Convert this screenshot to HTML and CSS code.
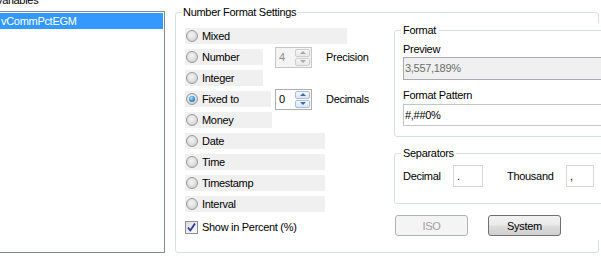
FILE: index.html
```html
<!DOCTYPE html>
<html>
<head>
<meta charset="utf-8">
<link rel="stylesheet" href="styles.css">
</head>
<body>
<div class="root">
  <div class="vars">
    <div class="vars-label">Variables</div>
    <div class="listbox">
      <div class="item selected">vCommPctEGM</div>
    </div>
  </div>

  <fieldset class="group outer">
    <legend>Number Format Settings</legend>
    <div class="cols">
      <div class="options">
        <div class="rows">
          <div class="row"><label class="opt w-mixed"><span class="radio"></span>Mixed</label></div>
          <div class="row">
            <label class="opt w-num"><span class="radio"></span>Number</label>
            <div class="spin disabled gap-num"><span class="val">4</span><span class="btns"><span class="sbtn"><i class="up"></i></span><span class="sbtn"><i class="down"></i></span></span></div>
            <span class="spin-label">Precision</span>
          </div>
          <div class="row"><label class="opt w-num"><span class="radio"></span>Integer</label></div>
          <div class="row">
            <label class="opt w-fixed"><span class="radio on"></span>Fixed to</label>
            <div class="spin gap-fixed"><span class="val">0</span><span class="btns"><span class="sbtn"><i class="up"></i></span><span class="sbtn"><i class="down"></i></span></span></div>
            <span class="spin-label">Decimals</span>
          </div>
          <div class="row"><label class="opt w-money"><span class="radio"></span>Money</label></div>
          <div class="row"><label class="opt w-wide"><span class="radio"></span>Date</label></div>
          <div class="row"><label class="opt w-wide"><span class="radio"></span>Time</label></div>
          <div class="row"><label class="opt w-wide"><span class="radio"></span>Timestamp</label></div>
          <div class="row"><label class="opt w-wide"><span class="radio"></span>Interval</label></div>
        </div>
        <label class="check-row">
          <span class="checkbox"><svg width="11" height="11" viewBox="0 0 11 11"><path d="M2 5.5 L4.3 8.5 L9 1.5" fill="none" stroke="#2a3c9c" stroke-width="1.8" stroke-linejoin="round"/></svg></span>
          Show in Percent (%)
        </label>
      </div>

      <div class="side">
        <fieldset class="group format">
          <legend>Format</legend>
          <div class="field-label first">Preview</div>
          <div class="textbox readonly">3,557,189%</div>
          <div class="field-label second">Format Pattern</div>
          <div class="textbox pattern">#,##0%</div>
        </fieldset>

        <fieldset class="group separators">
          <legend>Separators</legend>
          <div class="sep-row">
            <span class="sep-label dec">Decimal</span>
            <div class="textbox small dec-box">.</div>
            <span class="sep-label th">Thousand</span>
            <div class="textbox small th-box">,</div>
          </div>
        </fieldset>

        <div class="buttons">
          <button class="btn disabled">ISO</button>
          <button class="btn">System</button>
        </div>
      </div>
    </div>
  </fieldset>
</div>
</body>
</html>
```

FILE: styles.css
```css
html, body {
  margin: 0;
  padding: 0;
  background: #fff;
}
body {
  width: 601px;
  height: 270px;
  overflow: hidden;
  font-family: "Liberation Sans", Arial, sans-serif;
  font-size: 11px;
  letter-spacing: -0.3px;
  color: #000;
  line-height: 14px;
}
.root {
  display: flex;
  align-items: flex-start;
}
.vars {
  margin-left: -5px;
  margin-top: -7px;
  width: 170px;
  flex-shrink: 0;
}
.vars-label {
  height: 14px;
  padding-left: 1px;
}
.listbox {
  margin-top: 4px;
  height: 242px;
  box-sizing: border-box;
  border: 1px solid #828790;
  padding: 1px;
}
.item {
  height: 16px;
  line-height: 16px;
  padding-left: 4px;
}
.item.selected {
  background: #3399ff;
  color: #fff;
}

.group {
  margin: 0;
  border: 1px solid #d5dfe5;
  border-radius: 3px;
  min-width: 0;
}
.group legend {
  line-height: 14px;
  height: 14px;
}
.outer {
  margin-left: 10px;
  margin-top: 5px;
  width: 424px;
  box-sizing: border-box;
  padding: 4px 0 12px 9px;
}
.outer > legend {
  margin-left: -3px;
  padding: 0 1px;
}
.cols {
  display: flex;
  align-items: flex-start;
}
.options {
  width: 209px;
  flex-shrink: 0;
  margin-top: 5px;
}
.rows {
  display: flex;
  flex-direction: column;
  gap: 5px;
}
.row {
  display: flex;
  align-items: center;
  height: 16px;
}
.opt {
  display: flex;
  align-items: center;
  height: 16px;
  background: #f0f0f0;
  padding-left: 1px;
  box-sizing: border-box;
  flex-shrink: 0;
}
.w-mixed { width: 162px; }
.w-num { width: 78px; }
.w-fixed { width: 86px; }
.w-money { width: 87px; }
.w-wide { width: 140px; }

.radio {
  width: 12px;
  height: 12px;
  border-radius: 50%;
  box-sizing: border-box;
  border: 1px solid #9a9a9a;
  background: radial-gradient(circle at 45% 40%, #f4f4f4 0%, #e2e2e2 45%, #c4c4c4 100%);
  margin-right: 4px;
  display: flex;
  align-items: center;
  justify-content: center;
  flex-shrink: 0;
}
.radio.on::after {
  content: "";
  width: 6px;
  height: 6px;
  border-radius: 50%;
  background: radial-gradient(circle at 40% 35%, #b8ecff 0%, #3f9be0 45%, #124f94 100%);
}

.spin {
  display: flex;
  width: 37px;
  height: 21px;
  box-sizing: border-box;
  border: 1px solid #abadb3;
  background: #fff;
  padding: 1px;
  flex-shrink: 0;
}
.gap-num { margin-left: 12px; }
.gap-fixed { margin-left: 4px; }
.spin .val {
  flex: 1;
  padding-left: 2px;
  line-height: 17px;
}
.spin .btns {
  width: 15px;
  display: flex;
  flex-direction: column;
  gap: 1px;
}
.sbtn {
  flex: 1;
  box-sizing: border-box;
  border: 1px solid #a9bdd6;
  border-radius: 2px;
  background: linear-gradient(#f6f9fd, #d9e6f5);
  display: flex;
  align-items: center;
  justify-content: center;
}
.sbtn i {
  width: 0;
  height: 0;
  border-left: 3px solid transparent;
  border-right: 3px solid transparent;
}
.sbtn i.up { border-bottom: 3px solid #3d6aa8; }
.sbtn i.down { border-top: 3px solid #3d6aa8; }
.spin.disabled {
  border-color: #c4c6c9;
  background: #f4f4f4;
  color: #8d8d8d;
}
.spin.disabled .sbtn {
  border-color: #cdcdcd;
  background: linear-gradient(#f6f6f6, #e8e8e8);
}
.spin.disabled .sbtn i.up { border-bottom-color: #a8a8a8; }
.spin.disabled .sbtn i.down { border-top-color: #a8a8a8; }
.spin-label {
  margin-left: 14px;
}

.check-row {
  display: flex;
  align-items: center;
  height: 16px;
  margin-top: 7px;
}
.checkbox {
  width: 13px;
  height: 13px;
  box-sizing: border-box;
  border: 1px solid #8e8f8f;
  background: linear-gradient(135deg, #dcdcdc, #fbfbfb);
  margin-right: 4px;
  display: flex;
  align-items: center;
  justify-content: center;
}
.checkbox svg { display: block; }

.side {
  width: 220px;
  flex-shrink: 0;
  background: #fff;
  padding-bottom: 4px;
}
.format, .separators {
  background: #fff;
  padding: 0 0 10px 8px;
}
.format > legend, .separators > legend {
  margin-left: -2px;
  padding: 0 2px;
}
.field-label.first { margin-top: 5px; }
.field-label.second { margin-top: 8px; }
.textbox {
  box-sizing: border-box;
  border: 1px solid #b9bcc2;
  background: #fff;
  padding-left: 1px;
}
.textbox.readonly {
  margin-top: 1px;
  height: 23px;
  line-height: 21px;
  background: #f0f0f0;
  border-color: #a8abb0;
  color: #6d6d6d;
}
.textbox.pattern {
  margin-top: 2px;
  height: 22px;
  line-height: 20px;
  border-color: #c3c6cb;
}
.separators {
  margin-top: 9px;
  padding-bottom: 16px;
}
.sep-row {
  display: flex;
  align-items: center;
  margin-top: 5px;
}
.sep-label.dec { width: 50px; }
.sep-label.th { margin-left: 24px; width: 59px; }
.textbox.small {
  height: 22px;
  line-height: 20px;
  padding-left: 3px;
  border-color: #d3d5d8;
}
.dec-box { width: 30px; }
.th-box { width: 28px; }

.buttons {
  display: flex;
  gap: 20px;
  margin-top: 11px;
  margin-left: 1px;
}
.btn {
  width: 73px;
  height: 21px;
  box-sizing: border-box;
  border: 1px solid #707070;
  border-radius: 3px;
  background: linear-gradient(#f2f2f2 0%, #ebebeb 48%, #dddddd 52%, #cfcfcf 100%);
  font-family: "Liberation Sans", Arial, sans-serif;
  font-size: 11px;
  letter-spacing: -0.3px;
  color: #000;
  padding: 0;
  line-height: 18px;
}
.btn.disabled {
  border-color: #adb2b5;
  background: #f4f4f4;
  color: #a0a0a0;
}
```
